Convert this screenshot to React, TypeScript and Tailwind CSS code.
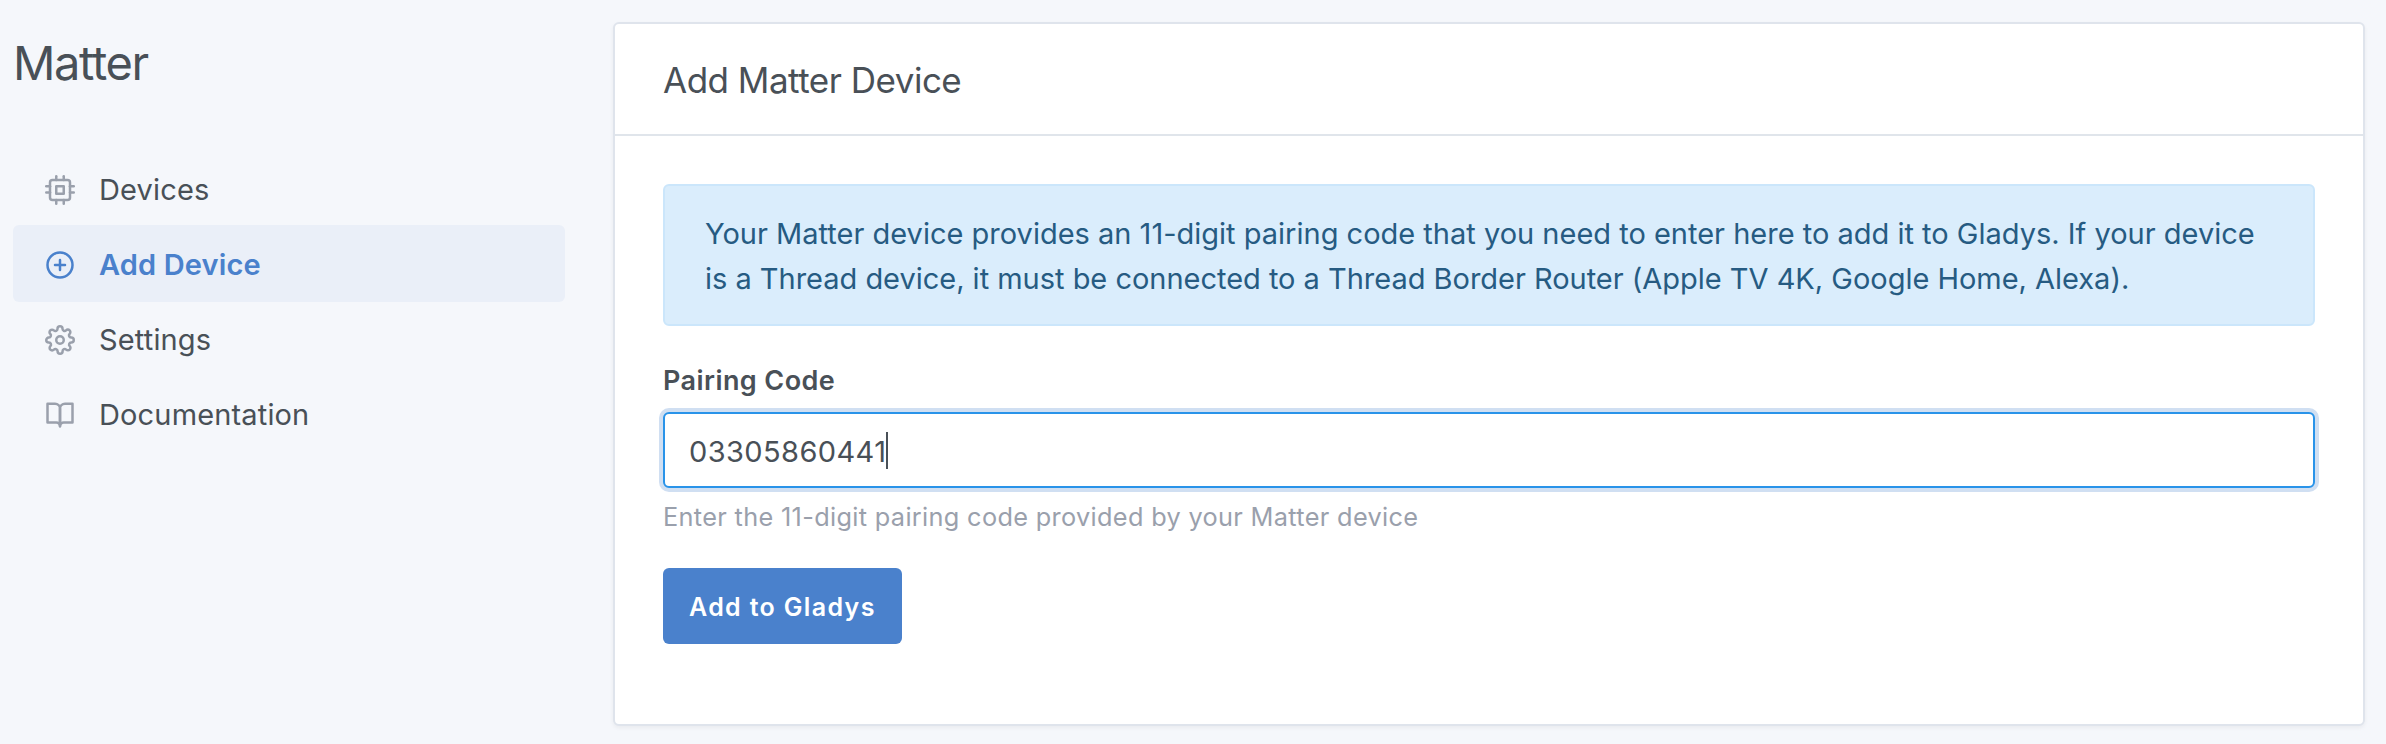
import { FiBookOpen, FiCpu, FiPlusCircle, FiSettings } from "react-icons/fi";
import type { IconType } from "react-icons";

const navItems: { label: string; icon: IconType; active?: boolean }[] = [
  { label: "Devices", icon: FiCpu },
  { label: "Add Device", icon: FiPlusCircle, active: true },
  { label: "Settings", icon: FiSettings },
  { label: "Documentation", icon: FiBookOpen },
];

function Sidebar() {
  return (
    <aside className="ml-[13px] w-[552px] shrink-0 pt-[33px]">
      <h1 className="text-[47px] leading-[60px] tracking-[-1.4px]">Matter</h1>
      <nav className="mt-[57px] flex flex-col">
        {navItems.map(({ label, icon: Icon, active }) => (
          <a
            key={label}
            className={
              active
                ? "-mb-0.5 flex h-[77px] items-center gap-6 rounded-md bg-[#eaeff8] pt-0.5 pl-8 font-semibold text-[#4a81cc]"
                : "-mb-0.5 flex h-[77px] items-center gap-6 rounded-md pt-0.5 pl-8"
            }
          >
            <Icon size={30} className={active ? "text-[#4a81cc]" : "text-[#9aa0ac]"} />
            <span className="text-[29px] tracking-[0.15px]">{label}</span>
          </a>
        ))}
      </nav>
    </aside>
  );
}

function AddDeviceCard() {
  return (
    <section className="mt-[22px] ml-12 h-[704px] w-[1752px] rounded-md border-2 border-[#dfe4ec] bg-white shadow-[0_2px_4px_rgba(0,0,0,0.05)]">
      <header className="flex h-28 items-center border-b-2 border-[#e0e5eb] px-12 pb-px">
        <h3 className="pt-0.5 text-[35px] leading-[44px] tracking-[-0.5px]">Add Matter Device</h3>
      </header>
      <div className="p-12">
        <div className="h-[142px] rounded-md border-2 border-[#cbe6fb] bg-[#daedfc] pt-[25px] pl-10 text-[29px] leading-[45px] whitespace-nowrap text-[#265b82]">
          <p>
            Your Matter device provides an 11-digit pairing code that you need to enter here to add it to Gladys. If
            your device
          </p>
          <p className="tracking-[-0.02px]">
            is a Thread device, it must be connected to a Thread Border Router (Apple TV 4K, Google Home, Alexa).
          </p>
        </div>
        <label className="mt-[35px] block text-[27px] leading-10 font-semibold tracking-[0.42px]">Pairing Code</label>
        <div
          role="textbox"
          className="mt-[11px] flex h-[76px] items-center rounded-md border-2 border-[#2993e9] bg-white pt-[3px] pl-6 text-[29px] tracking-[0.4px] shadow-[0_0_0_4px_#d0dff2]"
        >
          03305860441
          <span className="-mt-[3px] h-[37px] w-0.5 bg-[#495057]" />
        </div>
        <small className="mt-2.5 block text-[25.3px] leading-[38px] tracking-[0.33px] text-[#9aa0ac]">
          Enter the 11-digit pairing code provided by your Matter device
        </small>
        <button className="mt-8 flex h-[76px] w-[239px] items-center rounded-md bg-[#4a81cc] pt-[3px] pl-[26px] text-[25px] font-semibold tracking-[1.34px] whitespace-nowrap text-white">
          Add to Gladys
        </button>
      </div>
    </section>
  );
}

export default function App() {
  return (
    <div className="flex h-[744px] w-[2386px] overflow-hidden bg-[#f5f7fb] font-['Inter',sans-serif] text-[#495057]">
      <Sidebar />
      <AddDeviceCard />
    </div>
  );
}
